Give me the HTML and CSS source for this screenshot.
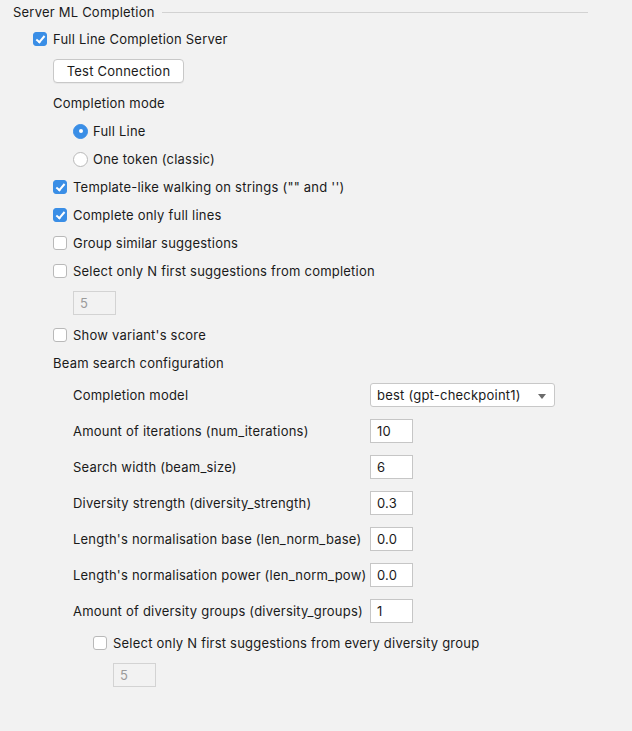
FILE: index.html
```html
<!DOCTYPE html>
<html>
<head>
<meta charset="utf-8">
<link rel="stylesheet" href="styles.css">
</head>
<body>
<div class="panel">
  <div class="header">
    <span class="title">Server ML Completion</span>
    <span class="rule"></span>
  </div>
  <div class="content">
    <label class="row"><span class="cb checked"></span>Full Line Completion Server</label>
    <div class="ctl ind1"><button class="btn">Test Connection</button></div>
    <div class="row ind1">Completion mode</div>
    <label class="row ind2"><span class="radio on"></span>Full Line</label>
    <label class="row ind2"><span class="radio"></span>One token (classic)</label>
    <label class="row ind1"><span class="cb checked"></span>Template-like walking on strings ("" and '')</label>
    <label class="row ind1"><span class="cb checked"></span>Complete only full lines</label>
    <label class="row ind1"><span class="cb"></span>Group similar suggestions</label>
    <label class="row ind1"><span class="cb"></span>Select only N first suggestions from completion</label>
    <div class="ctl ind2"><span class="field disabled">5</span></div>
    <label class="row ind1"><span class="cb"></span>Show variant's score</label>
    <div class="row ind1">Beam search configuration</div>
    <div class="grid ind2">
      <span class="lbl">Completion model</span>
      <span class="combo">best (gpt-checkpoint1)<span class="arrow"></span></span>
      <span class="lbl">Amount of iterations (num_iterations)</span>
      <span class="field">10</span>
      <span class="lbl">Search width (beam_size)</span>
      <span class="field">6</span>
      <span class="lbl">Diversity strength (diversity_strength)</span>
      <span class="field">0.3</span>
      <span class="lbl">Length's normalisation base (len_norm_base)</span>
      <span class="field">0.0</span>
      <span class="lbl">Length's normalisation power (len_norm_pow)</span>
      <span class="field">0.0</span>
      <span class="lbl">Amount of diversity groups (diversity_groups)</span>
      <span class="field">1</span>
    </div>
    <label class="row ind3"><span class="cb"></span>Select only N first suggestions from every diversity group</label>
    <div class="ctl ind4"><span class="field disabled">5</span></div>
  </div>
</div>
</body>
</html>
```
FILE: styles.css
```css
html, body {
  margin: 0;
  padding: 0;
  background: #f2f2f2;
}
body {
  width: 632px;
  height: 731px;
  font-family: Inter, "Liberation Sans", sans-serif;
  font-size: 13px;
  letter-spacing: 0.22px;
  color: #1a1a1a;
}
.header {
  display: flex;
  align-items: center;
  height: 24px;
  padding-left: 13px;
  padding-right: 44px;
}
.rule {
  flex: 1;
  height: 1px;
  background: #d2d2d2;
  margin-left: 7px;
}
.content {
  padding-left: 33px;
  padding-top: 1px;
  display: flex;
  flex-direction: column;
}
.row {
  display: flex;
  align-items: center;
  height: 28px;
}
.ctl {
  display: flex;
  height: 24px;
  margin: 6px 0;
}
.ind1 { margin-left: 20px; }
.ind2 { margin-left: 40px; }
.ind3 { margin-left: 60px; }
.ind4 { margin-left: 80px; }
.cb {
  width: 14px;
  height: 14px;
  box-sizing: border-box;
  border: 1px solid #b9b9b9;
  border-radius: 3px;
  background: #fff;
  margin-right: 6px;
  position: relative;
  flex: none;
}
.cb.checked {
  background: #3a8ee6;
  border-color: #3a8ee6;
}
.cb.checked::after {
  content: "";
  position: absolute;
  left: 4px;
  top: 1px;
  width: 3px;
  height: 7px;
  border-right: 2px solid #fff;
  border-bottom: 2px solid #fff;
  transform: rotate(40deg);
}
.radio {
  width: 15px;
  height: 15px;
  box-sizing: border-box;
  border: 1px solid #b9b9b9;
  border-radius: 50%;
  background: #fff;
  margin-right: 5px;
  position: relative;
  flex: none;
}
.radio.on {
  background: #3a8ee6;
  border-color: #3a8ee6;
}
.radio.on::after {
  content: "";
  position: absolute;
  left: 4.5px;
  top: 4.5px;
  width: 4px;
  height: 4px;
  border-radius: 50%;
  background: #fff;
}
.btn {
  width: 131px;
  height: 24px;
  font: inherit;
  letter-spacing: inherit;
  color: #1a1a1a;
  background: #fff;
  border: 1px solid #c8c8c8;
  border-radius: 4px;
  box-shadow: 0 1px 0 rgba(0,0,0,0.04);
  padding: 0;
}
.field {
  display: flex;
  align-items: center;
  box-sizing: border-box;
  width: 43px;
  height: 24px;
  background: #fff;
  border: 1px solid #c6c6c6;
  padding-left: 6px;
}
.field.disabled {
  background: transparent;
  border-color: #d3d3d3;
  color: #9b9b9b;
}
.grid {
  display: grid;
  grid-template-columns: 297px auto;
  row-gap: 12px;
  align-items: center;
  justify-items: start;
  margin-top: 6px;
  margin-bottom: 6px;
}
.combo {
  display: flex;
  align-items: center;
  box-sizing: border-box;
  width: 185px;
  height: 24px;
  background: #fff;
  border: 1px solid #c8c8c8;
  border-radius: 3px;
  padding-left: 6px;
  position: relative;
}
.arrow {
  position: absolute;
  right: 8px;
  top: 10px;
  width: 0;
  height: 0;
  border-left: 4px solid transparent;
  border-right: 4px solid transparent;
  border-top: 5px solid #6b6b6b;
}
```
